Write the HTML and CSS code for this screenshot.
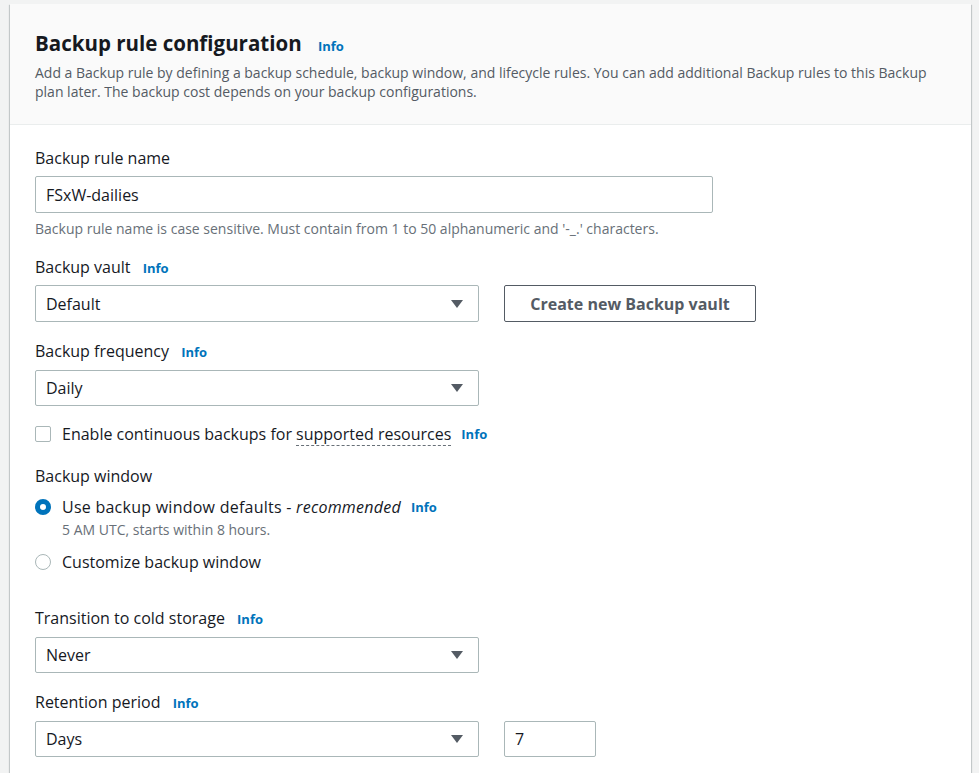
FILE: index.html
```html
<!DOCTYPE html>
<html lang="en">
<head>
<meta charset="utf-8">
<title>Backup rule configuration</title>
<link rel="stylesheet" href="styles.css">
</head>
<body>
<section class="container">
  <header class="container-header">
    <h2 class="title">Backup rule configuration <a class="info title-info">Info</a></h2>
    <p class="description">Add a Backup rule by defining a backup schedule, backup window, and lifecycle rules. You can add additional Backup rules to this Backup plan later. The backup cost depends on your backup configurations.</p>
  </header>
  <div class="container-body">
    <div class="field field-name">
      <label class="label">Backup rule name</label>
      <div class="input wide">FSxW-dailies</div>
      <p class="constraint">Backup rule name is case sensitive. Must contain from 1 to 50 alphanumeric and '-_.' characters.</p>
    </div>

    <div class="field field-vault">
      <label class="label">Backup vault <a class="info">Info</a></label>
      <div class="row">
        <div class="select">
          <span>Default</span>
          <svg class="caret" width="12" height="8" viewBox="0 0 12 8"><path d="M0 0h12L6 8z"/></svg>
        </div>
        <button class="button">Create new Backup vault</button>
      </div>
    </div>

    <div class="field field-frequency">
      <label class="label">Backup frequency <a class="info">Info</a></label>
      <div class="select">
        <span>Daily</span>
        <svg class="caret" width="12" height="8" viewBox="0 0 12 8"><path d="M0 0h12L6 8z"/></svg>
      </div>
    </div>

    <div class="checkbox-row">
      <span class="checkbox"></span>
      <span class="checkbox-label">Enable continuous backups for <span class="dotted">supported resources</span></span>
      <a class="info">Info</a>
    </div>

    <div class="field field-window">
      <label class="label">Backup window</label>
      <div class="radio-row">
        <span class="radio checked"></span>
        <span class="radio-label wide-label">Use backup window defaults - <em>recommended</em></span>
        <a class="info">Info</a>
      </div>
      <p class="radio-desc">5 AM UTC, starts within 8 hours.</p>
      <div class="radio-row second">
        <span class="radio"></span>
        <span class="radio-label">Customize backup window</span>
      </div>
    </div>

    <div class="field field-cold">
      <label class="label">Transition to cold storage <a class="info">Info</a></label>
      <div class="select">
        <span>Never</span>
        <svg class="caret" width="12" height="8" viewBox="0 0 12 8"><path d="M0 0h12L6 8z"/></svg>
      </div>
    </div>

    <div class="field field-retention">
      <label class="label">Retention period <a class="info">Info</a></label>
      <div class="row">
        <div class="select">
          <span>Days</span>
          <svg class="caret" width="12" height="8" viewBox="0 0 12 8"><path d="M0 0h12L6 8z"/></svg>
        </div>
        <div class="input number">7</div>
      </div>
    </div>
  </div>
</section>
</body>
</html>
```

FILE: styles.css
```css
* {
  box-sizing: border-box;
}

html,
body {
  margin: 0;
  padding: 0;
  background: #f2f3f3;
  height: 100%;
  overflow: hidden;
}

body {
  font-family: "Open Sans", "Noto Sans", Arial, sans-serif;
  color: #16191f;
  font-size: 16px;
}

.container {
  margin: 4px 8px 0 10px;
  width: 961px;
  min-height: 800px;
  background: #ffffff;
  box-shadow: 0 1px 1px 0 rgba(0, 28, 36, 0.3), 1px 1px 1px 0 rgba(0, 28, 36, 0.15), -1px 1px 1px 0 rgba(0, 28, 36, 0.15);
}

.container-header {
  background: #fafafa;
  border-bottom: 1px solid #eaeded;
  padding: 27px 25px 0 25px;
  height: 121px;
}

.title {
  margin: 0;
  font-size: 20.5px;
  line-height: 24px;
  font-weight: 700;
  color: #16191f;
}

.info {
  color: #0073bb;
  font-weight: 700;
  font-size: 13px;
  margin-left: 8px;
}

.title-info {
  margin-left: 11px;
}

.description {
  margin: 5px 0 0 0;
  font-size: 14px;
  line-height: 19px;
  color: #545b64;
}

.container-body {
  padding: 22px 25px 0 25px;
}

.label {
  display: block;
  font-size: 16px;
  line-height: 22px;
  color: #16191f;
}

.field .label {
  margin-bottom: 7px;
}

.field-vault,
.field-frequency,
.field-retention {
  margin-top: 18px;
}

.field-vault .label {
  margin-bottom: 6px;
}

.row {
  display: flex;
  align-items: center;
  gap: 25px;
}

.input,
.select {
  height: 37px;
  border: 1px solid #aab7b8;
  border-radius: 2px;
  background: #ffffff;
  display: flex;
  align-items: center;
  padding: 0 10px;
  font-size: 16px;
  color: #16191f;
}

.wide {
  width: 678px;
}

.select {
  width: 444px;
  justify-content: space-between;
}

.field-frequency .select,
.field-cold .select,
.field-retention .select {
  height: 36px;
}

.caret {
  fill: #545b64;
  margin-right: 5px;
}

.number {
  width: 92px;
  height: 36px;
}

.constraint {
  margin: 7px 0 0 0;
  font-size: 14px;
  line-height: 18px;
  color: #687078;
}

.button {
  font-family: inherit;
  height: 37px;
  width: 252px;
  border: 1px solid #545b64;
  border-radius: 2px;
  background: #ffffff;
  color: #545b64;
  font-weight: 700;
  font-size: 16px;
  padding: 0;
}

.checkbox-row {
  margin-top: 17px;
  display: flex;
  align-items: center;
  height: 22px;
}

.checkbox {
  width: 16px;
  height: 16px;
  border: 1px solid #aab7b8;
  border-radius: 2px;
  background: #ffffff;
  margin-right: 11px;
}

.checkbox-label {
  line-height: 22px;
}

.dotted {
  border-bottom: 1px dashed #687078;
}

.checkbox-row .info {
  margin-left: 10px;
}

.field-window {
  margin-top: 20px;
}

.field-window .label {
  margin-bottom: 9px;
}

.radio-row {
  display: flex;
  align-items: center;
  height: 22px;
}

.wide-label {
  letter-spacing: 0.25px;
}

.radio-row .info {
  margin-left: 10px;
}

.radio {
  width: 16px;
  height: 16px;
  border-radius: 50%;
  border: 1px solid #aab7b8;
  background: #ffffff;
  margin-right: 11px;
}

.radio.checked {
  border: 5px solid #0073bb;
}

.radio-desc {
  margin: 3px 0 0 27px;
  font-size: 14px;
  line-height: 18px;
  color: #687078;
}

.radio-row.second {
  margin-top: 12px;
}

.field-cold {
  margin-top: 34px;
}
```
